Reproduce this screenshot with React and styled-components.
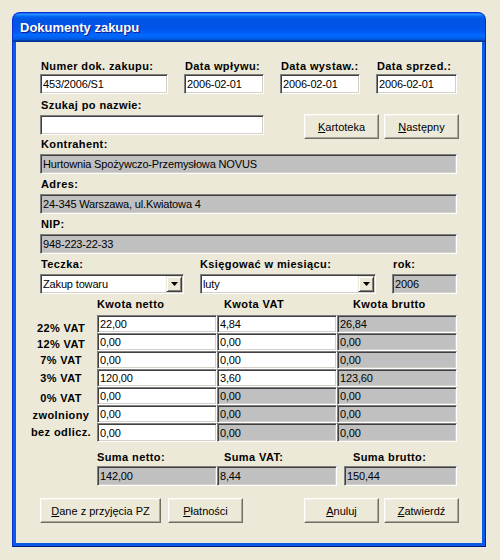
import React from 'react';
import styled, { createGlobalStyle } from 'styled-components';

const Global = createGlobalStyle`
  html, body { margin: 0; padding: 0; background: #ECE9D8; }
  body { font-family: "Liberation Sans", Arial, sans-serif; font-size: 11px; color: #000; }
  * { box-sizing: border-box; }
`;

const Desktop = styled.div`
  width: 500px;
  height: 560px;
  padding: 12px 0 0 12px;
  background: #ECE9D8;
`;

const Window = styled.div`
  width: 474px;
  display: flex;
  flex-direction: column;
`;

const TitleBar = styled.div`
  height: 30px;
  border-radius: 8px 8px 0 0;
  border: 1px solid #0831D9;
  border-bottom: none;
  border-right-color: #0029B8;
  background: linear-gradient(180deg, #0058EE 0%, #3593FF 4%, #288EFF 6%, #127DFF 8%, #036FFC 10%, #0262EE 14%, #0057E5 20%, #0054E3 24%, #0055EB 56%, #005BF5 66%, #026AFE 76%, #0062EF 86%, #0052D6 92%, #0040AB 94%, #003092 100%);
  display: flex;
  align-items: center;
  padding-left: 7px;
`;

const Title = styled.span`
  color: #fff;
  font-family: "Liberation Sans", Arial, sans-serif;
  font-weight: bold;
  font-size: 13px;
  line-height: 16px;
  margin-top: 1px;
  text-shadow: 1px 1px 0 #0A1E8C;
`;

const Frame = styled.div`
  background: #0C5BE4;
  border: 1px solid #0831D9;
  border-top: none;
  border-right-color: #001EA0;
  border-bottom-color: #001A8A;
  padding: 0 3px 3px;
`;

const Content = styled.div`
  background: #ECE9D8;
  height: 501px;
  padding: 18px 25px 0 24px;
  display: flex;
  flex-direction: column;
`;

const Row = styled.div`
  display: flex;
  align-items: flex-start;
  gap: ${p => p.$gap ?? 16}px;
  margin-top: ${p => p.$mt ?? 0}px;
  padding-left: ${p => p.$pl ?? 0}px;
`;

const Field = styled.div`
  display: flex;
  flex-direction: column;
  flex: none;
  width: ${p => (p.$w ? `${p.$w}px` : '100%')};
  margin-top: ${p => p.$mt ?? 0}px;
  margin-left: ${p => p.$ml ?? 0}px;
`;

const Label = styled.div`
  font-weight: bold;
  font-size: 11px;
  line-height: 13px;
  letter-spacing: 0.4px;
  white-space: nowrap;
  padding-left: ${p => p.$pl ?? 1}px;
  margin-bottom: ${p => p.$mb ?? 3}px;
`;

const TextBox = styled.div`
  height: ${p => p.$h ?? 20}px;
  background: ${p => (p.$ro ? '#C0C0C0' : '#fff')};
  border: 1px solid;
  border-color: #808080 #fff #fff #808080;
  box-shadow: inset 1px 1px #404040, inset -1px -1px #D4D0C8;
  padding: 0 1px 0 2px;
  display: flex;
  align-items: center;
  font-size: 11px;
  letter-spacing: -0.15px;
  white-space: nowrap;
  overflow: hidden;
`;

const Combo = styled(TextBox)`
  justify-content: space-between;
  padding-right: 1px;
`;

const DropButton = styled.div`
  width: 16px;
  height: 16px;
  flex: none;
  background: #ECE9D8;
  border: 1px solid;
  border-color: #ECE9D8 #404040 #404040 #ECE9D8;
  box-shadow: inset 1px 1px #fff, inset -1px -1px #808080;
  display: flex;
  align-items: center;
  justify-content: center;
`;

const Button = styled.button`
  width: ${p => p.$w ?? 75}px;
  height: 25px;
  flex: none;
  background: #ECE9D8;
  font-family: "Liberation Sans", Arial, sans-serif;
  font-size: 11px;
  color: #000;
  padding: 0;
  border: 1px solid;
  border-color: #fff #716F64 #716F64 #fff;
  box-shadow: inset -1px -1px #ACA899, inset 1px 1px #F1EFE2;
  display: flex;
  align-items: center;
  justify-content: center;
  cursor: default;
  u { text-decoration: underline; }
`;

const ButtonGroup = styled.div`
  display: flex;
  gap: ${p => p.$gap ?? 5}px;
  margin-left: ${p => (p.$right ? 'auto' : '0')};
  margin-right: ${p => (p.$right ? '-2px' : '0')};
  margin-top: ${p => p.$mt ?? 0}px;
  margin-bottom: ${p => p.$mb ?? 0}px;
`;

const VatGrid = styled.div`
  display: grid;
  grid-template-columns: 67px 120px 120px 120px;
  grid-template-rows: ${p => p.$rows};
  margin-left: -10px;
  margin-top: ${p => p.$mt ?? 0}px;
`;

const HeadCell = styled.div`
  font-weight: bold;
  font-size: 11px;
  line-height: 13px;
  letter-spacing: 0.4px;
  white-space: nowrap;
  padding-left: ${p => p.$pl ?? 0}px;
`;

const RowLabel = styled.div`
  font-weight: bold;
  font-size: 11px;
  line-height: 13px;
  letter-spacing: 0.4px;
  white-space: nowrap;
  text-align: center;
  padding-right: 5px;
  align-self: center;
  margin-top: ${p => (p.$dy ?? 0) * 2}px;
`;

const Arrow = () => (
  <svg width="7" height="4" viewBox="0 0 7 4">
    <polygon points="0,0 7,0 3.5,4" fill="#000" />
  </svg>
);

const Btn = ({ k, rest, w }) => (
  <Button $w={w}>
    <span><u>{k}</u>{rest}</span>
  </Button>
);

const vatRows = [
  { label: '22% VAT', netto: '22,00', vat: '4,84', brutto: '26,84', vatRo: false, dy: 4 },
  { label: '12% VAT', netto: '0,00', vat: '0,00', brutto: '0,00', vatRo: false, dy: 2 },
  { label: '7% VAT', netto: '0,00', vat: '0,00', brutto: '0,00', vatRo: false, dy: 0 },
  { label: '3% VAT', netto: '120,00', vat: '3,60', brutto: '123,60', vatRo: false, dy: 0 },
  { label: '0% VAT', netto: '0,00', vat: '0,00', brutto: '0,00', vatRo: true, dy: 2 },
  { label: 'zwolniony', netto: '0,00', vat: '0,00', brutto: '0,00', vatRo: true, dy: 1 },
  { label: 'bez odlicz.', netto: '0,00', vat: '0,00', brutto: '0,00', vatRo: true, dy: 0 },
];

export default function App() {
  return (
    <>
      <Global />
      <Desktop>
        <Window>
          <TitleBar>
            <Title>Dokumenty zakupu</Title>
          </TitleBar>
          <Frame>
            <Content>
              <Row>
                <Field $w={128}>
                  <Label $mb={1}>Numer dok. zakupu:</Label>
                  <TextBox>453/2006/S1</TextBox>
                </Field>
                <Field $w={80}>
                  <Label $mb={1}>Data wpływu:</Label>
                  <TextBox>2006-02-01</TextBox>
                </Field>
                <Field $w={80}>
                  <Label $mb={1}>Data wystaw.:</Label>
                  <TextBox>2006-02-01</TextBox>
                </Field>
                <Field $w={81}>
                  <Label $mb={1}>Data sprzed.:</Label>
                  <TextBox>2006-02-01</TextBox>
                </Field>
              </Row>

              <Row $mt={5}>
                <Field $w={224}>
                  <Label>Szukaj po nazwie:</Label>
                  <TextBox />
                </Field>
                <ButtonGroup $right $mt={15} $mb={-4}>
                  <Btn k="K" rest="artoteka" />
                  <Btn k="N" rest="astępny" />
                </ButtonGroup>
              </Row>

              <Field $mt={3}>
                <Label>Kontrahent:</Label>
                <TextBox $ro>Hurtownia Spożywczo-Przemysłowa NOVUS</TextBox>
              </Field>
              <Field $mt={4}>
                <Label>Adres:</Label>
                <TextBox $ro>24-345 Warszawa, ul.Kwiatowa 4</TextBox>
              </Field>
              <Field $mt={4}>
                <Label>NIP:</Label>
                <TextBox $ro>948-223-22-33</TextBox>
              </Field>

              <Row $mt={4}>
                <Field $w={144}>
                  <Label>Teczka:</Label>
                  <Combo>
                    <span>Zakup towaru</span>
                    <DropButton><Arrow /></DropButton>
                  </Combo>
                </Field>
                <Field $w={176}>
                  <Label $pl={0}>Księgować w miesiącu:</Label>
                  <Combo>
                    <span>luty</span>
                    <DropButton><Arrow /></DropButton>
                  </Combo>
                </Field>
                <Field $w={65}>
                  <Label>rok:</Label>
                  <TextBox $ro>2006</TextBox>
                </Field>
              </Row>

              <VatGrid $rows="13px" $mt={4}>
                <div />
                <HeadCell>Kwota netto</HeadCell>
                <HeadCell $pl={7}>Kwota VAT</HeadCell>
                <HeadCell $pl={16}>Kwota brutto</HeadCell>
              </VatGrid>

              <VatGrid $rows="repeat(6, 18px) 19px" $mt={4}>
                {vatRows.map(r => (
                  <React.Fragment key={r.label}>
                    <RowLabel $dy={r.dy}>{r.label}</RowLabel>
                    <TextBox $h="100%">{r.netto}</TextBox>
                    <TextBox $h="100%" $ro={r.vatRo}>{r.vat}</TextBox>
                    <TextBox $h="100%" $ro>{r.brutto}</TextBox>
                  </React.Fragment>
                ))}
              </VatGrid>

              <Row $mt={9} $gap={0} $pl={57}>
                <Field $w={120}>
                  <Label $mb={2} $pl={0}>Suma netto:</Label>
                  <TextBox $ro>142,00</TextBox>
                </Field>
                <Field $w={120}>
                  <Label $mb={2} $pl={7}>Suma VAT:</Label>
                  <TextBox $ro>8,44</TextBox>
                </Field>
                <Field $w={113} $ml={7}>
                  <Label $mb={2} $pl={9}>Suma brutto:</Label>
                  <TextBox $ro>150,44</TextBox>
                </Field>
              </Row>

              <Row $mt={12} $gap={0}>
                <ButtonGroup $gap={7}>
                  <Btn k="D" rest="ane z przyjęcia PZ" w={121} />
                  <Btn k="P" rest="łatności" />
                </ButtonGroup>
                <ButtonGroup $right>
                  <Btn k="A" rest="nuluj" />
                  <Btn k="Z" rest="atwierdź" />
                </ButtonGroup>
              </Row>
            </Content>
          </Frame>
        </Window>
      </Desktop>
    </>
  );
}
